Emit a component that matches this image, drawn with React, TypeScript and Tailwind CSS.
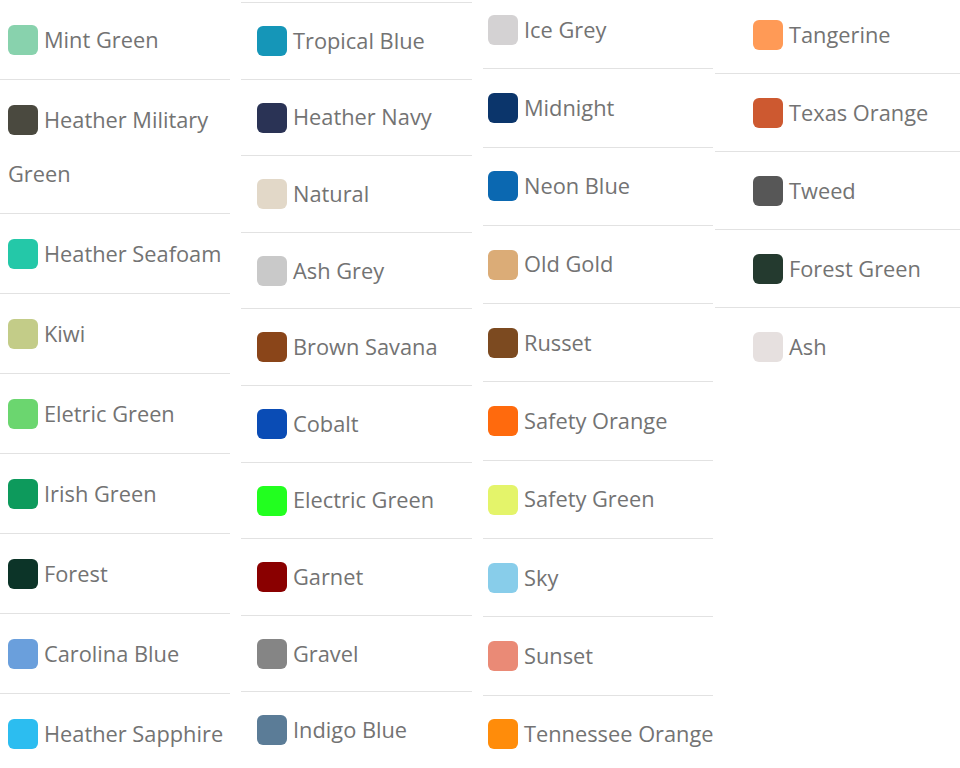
type Swatch = { name: string; color: string };

const col1: Swatch[] = [
  { name: 'Mint Green', color: '#88d2ad' },
  { name: 'Heather Military Green', color: '#4a493f' },
  { name: 'Heather Seafoam', color: '#24c8a8' },
  { name: 'Kiwi', color: '#c3cc88' },
  { name: 'Eletric Green', color: '#6bd66f' },
  { name: 'Irish Green', color: '#0d9a5c' },
  { name: 'Forest', color: '#0c3428' },
  { name: 'Carolina Blue', color: '#6a9fdc' },
  { name: 'Heather Sapphire', color: '#2cbdf0' },
];

const col2: Swatch[] = [
  { name: 'Tropical Blue', color: '#1596b8' },
  { name: 'Heather Navy', color: '#2a3355' },
  { name: 'Natural', color: '#e2d8c8' },
  { name: 'Ash Grey', color: '#c9c9c9' },
  { name: 'Brown Savana', color: '#8a4519' },
  { name: 'Cobalt', color: '#0a4cb5' },
  { name: 'Electric Green', color: '#22ff1f' },
  { name: 'Garnet', color: '#8a0000' },
  { name: 'Gravel', color: '#858585' },
  { name: 'Indigo Blue', color: '#5b7c97' },
];

const col3: Swatch[] = [
  { name: 'Ice Grey', color: '#d4d2d3' },
  { name: 'Midnight', color: '#0b356b' },
  { name: 'Neon Blue', color: '#0b68b1' },
  { name: 'Old Gold', color: '#dbac77' },
  { name: 'Russet', color: '#7c4a20' },
  { name: 'Safety Orange', color: '#ff6a0d' },
  { name: 'Safety Green', color: '#e4f46a' },
  { name: 'Sky', color: '#88cdea' },
  { name: 'Sunset', color: '#ea8a76' },
  { name: 'Tennessee Orange', color: '#ff8c0a' },
];

const col4: Swatch[] = [
  { name: 'Tangerine', color: '#ff9a56' },
  { name: 'Texas Orange', color: '#cd5930' },
  { name: 'Tweed', color: '#575757' },
  { name: 'Forest Green', color: '#243a2f' },
  { name: 'Ash', color: '#e6e0df' },
];

interface ColumnProps {
  items: Swatch[];
  className: string;
  rowClass: string;
}

const Column = ({ items, className, rowClass }: ColumnProps) => (
  <ul className={className}>
    {items.map((item, i) => (
      <li
        key={item.name}
        className={`${rowClass} leading-[54px] ${
          i < items.length - 1 ? 'border-b border-[#e2e2e2]' : ''
        }`}
      >
        <span
          className="inline-block w-[30px] h-[30px] rounded-[6px] align-middle mr-[6px] relative -top-[2px]"
          style={{ backgroundColor: item.color }}
        />
        {item.name}
      </li>
    ))}
  </ul>
);

export default function App() {
  return (
    <div
      className="w-[960px] h-[768px] overflow-hidden bg-white flex items-start text-[21.8px] text-[#737373]"
      style={{ fontFamily: '"Open Sans", "Noto Sans", sans-serif' }}
    >
      <Column
        items={col1}
        className="w-[230px] shrink-0"
        rowClass="py-[12.5px] pl-[8px]"
      />
      <Column
        items={col2}
        className="w-[231px] shrink-0 ml-[11px] mt-[2px] border-t border-[#e2e2e2]"
        rowClass="py-[10.8px] pl-[16px] whitespace-nowrap"
      />
      <Column
        items={col3}
        className="w-[230px] shrink-0 ml-[11px] -mt-[9px]"
        rowClass="py-[11.65px] pl-[5px] whitespace-nowrap"
      />
      <Column
        items={col4}
        className="w-[245px] shrink-0 ml-[2px] -mt-[4px]"
        rowClass="py-[11.5px] pl-[38px] whitespace-nowrap"
      />
    </div>
  );
}
